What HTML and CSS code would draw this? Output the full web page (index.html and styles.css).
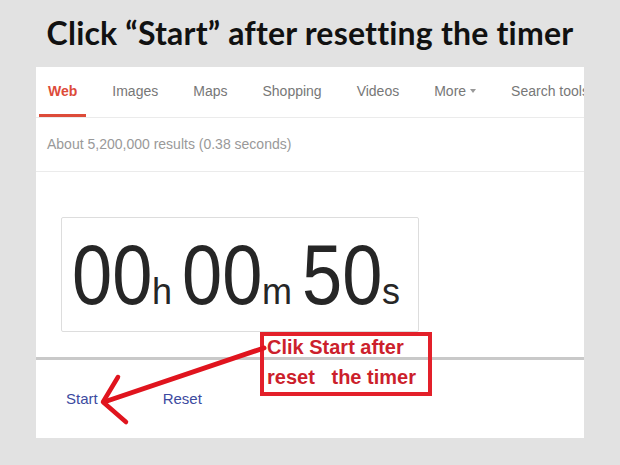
FILE: index.html
```html
<!DOCTYPE html>
<html lang="en">

<head>
  <meta charset="UTF-8">
  <meta name="viewport" content="width=device-width, initial-scale=1.0">
  <title>Timer</title>
  <link rel="stylesheet" href="styles.css">
</head>

<body>
  <h1 class="title">Click “Start” after resetting the timer</h1>

  <div class="shot">
    <div class="tabs">
      <span class="tab active">Web</span>
      <span class="tab">Images</span>
      <span class="tab">Maps</span>
      <span class="tab">Shopping</span>
      <span class="tab">Videos</span>
      <span class="tab">More<i class="caret"></i></span>
      <span class="tab">Search tools</span>
    </div>

    <div class="stats">About 5,200,000 results (0.38 seconds)</div>

    <div class="timer-area">
      <div class="timer">
        <span class="num">00</span><span class="unit">h</span>
        <span class="num">00</span><span class="unit">m</span>
        <span class="num">50</span><span class="unit">s</span>
      </div>
    </div>

    <div class="controls">
      <span class="link">Start</span>
      <span class="link">Reset</span>
    </div>

    <!-- annotation drawn over the screenshot -->
    <div class="note">
      <p>Clik Start after<br>reset&nbsp;&nbsp;&nbsp;the timer</p>
    </div>
    <svg class="arrow" width="548" height="371" viewBox="0 0 548 371">
      <path d="M228 281 L68 335" stroke="#e0141e" stroke-width="5" stroke-linecap="round" fill="none" />
      <path d="M82 310 L67 335 L90 355" stroke="#e0141e" stroke-width="4.5" stroke-linecap="round" stroke-linejoin="round" fill="none" />
    </svg>
  </div>
</body>

</html>
```

FILE: styles.css
```css
body {
  margin: 0;
  background-color: #e2e2e2;
  font-family: 'Liberation Sans', Arial, sans-serif;
  height: 465px;
  overflow: hidden;
}

.title {
  margin: 0;
  padding-top: 13px;
  text-align: center;
  font-family: Lato, 'Open Sans', sans-serif;
  font-weight: 700;
  font-size: 32px;
  letter-spacing: 0.2px;
  line-height: 40px;
  color: #111;
  white-space: nowrap;
}

.shot {
  position: relative;
  margin: 14px 0 0 36px;
  width: 548px;
  height: 371px;
  background-color: #fff;
  overflow: hidden;
}

.tabs {
  display: flex;
  gap: 17px;
  padding-left: 3px;
  height: 50px;
  border-bottom: 1px solid #ebebeb;
  white-space: nowrap;
}

.tab {
  display: flex;
  align-items: center;
  padding: 0 9px;
  border-bottom: 3px solid transparent;
  font-size: 14px;
  color: #777;
}

.tab.active {
  color: #dd4b39;
  font-weight: 700;
  border-bottom-color: #dd4b39;
}

.caret {
  margin-left: 4px;
  border-left: 3px solid transparent;
  border-right: 3px solid transparent;
  border-top: 4px solid #999;
}

.stats {
  padding: 0 11px;
  line-height: 53px;
  border-bottom: 1px solid #ebebeb;
  font-size: 14px;
  color: #999;
}

.timer-area {
  padding: 45px 0 25px 25px;
  border-bottom: 3px solid #c9c9c9;
}

.timer {
  display: flex;
  align-items: baseline;
  width: 358px;
  height: 115px;
  box-sizing: border-box;
  padding: 13px 0 0 10px;
  border: 1px solid #ddd;
  border-radius: 2px;
  color: #262626;
  white-space: nowrap;
}

.num {
  display: inline-block;
  width: 80px;
  font-size: 86px;
  line-height: 86px;
  transform: scaleX(0.84);
  transform-origin: left;
}

.unit {
  font-size: 36px;
  margin-right: 10px;
}

.controls {
  display: flex;
  gap: 65px;
  padding: 29px 0 0 30px;
  font-size: 15px;
  line-height: 20px;
}

.link {
  color: #3c4aa0;
}

.note {
  position: absolute;
  left: 224px;
  top: 265px;
  width: 161px;
  height: 56px;
  padding-left: 3px;
  border: 4px solid #e3202a;
  font-weight: 700;
  font-size: 20px;
  line-height: 30px;
  color: #cc1f2c;
  white-space: nowrap;
}

.note p {
  margin: -4px 0 0;
}

.arrow {
  position: absolute;
  left: 0;
  top: 0;
  pointer-events: none;
}
```
